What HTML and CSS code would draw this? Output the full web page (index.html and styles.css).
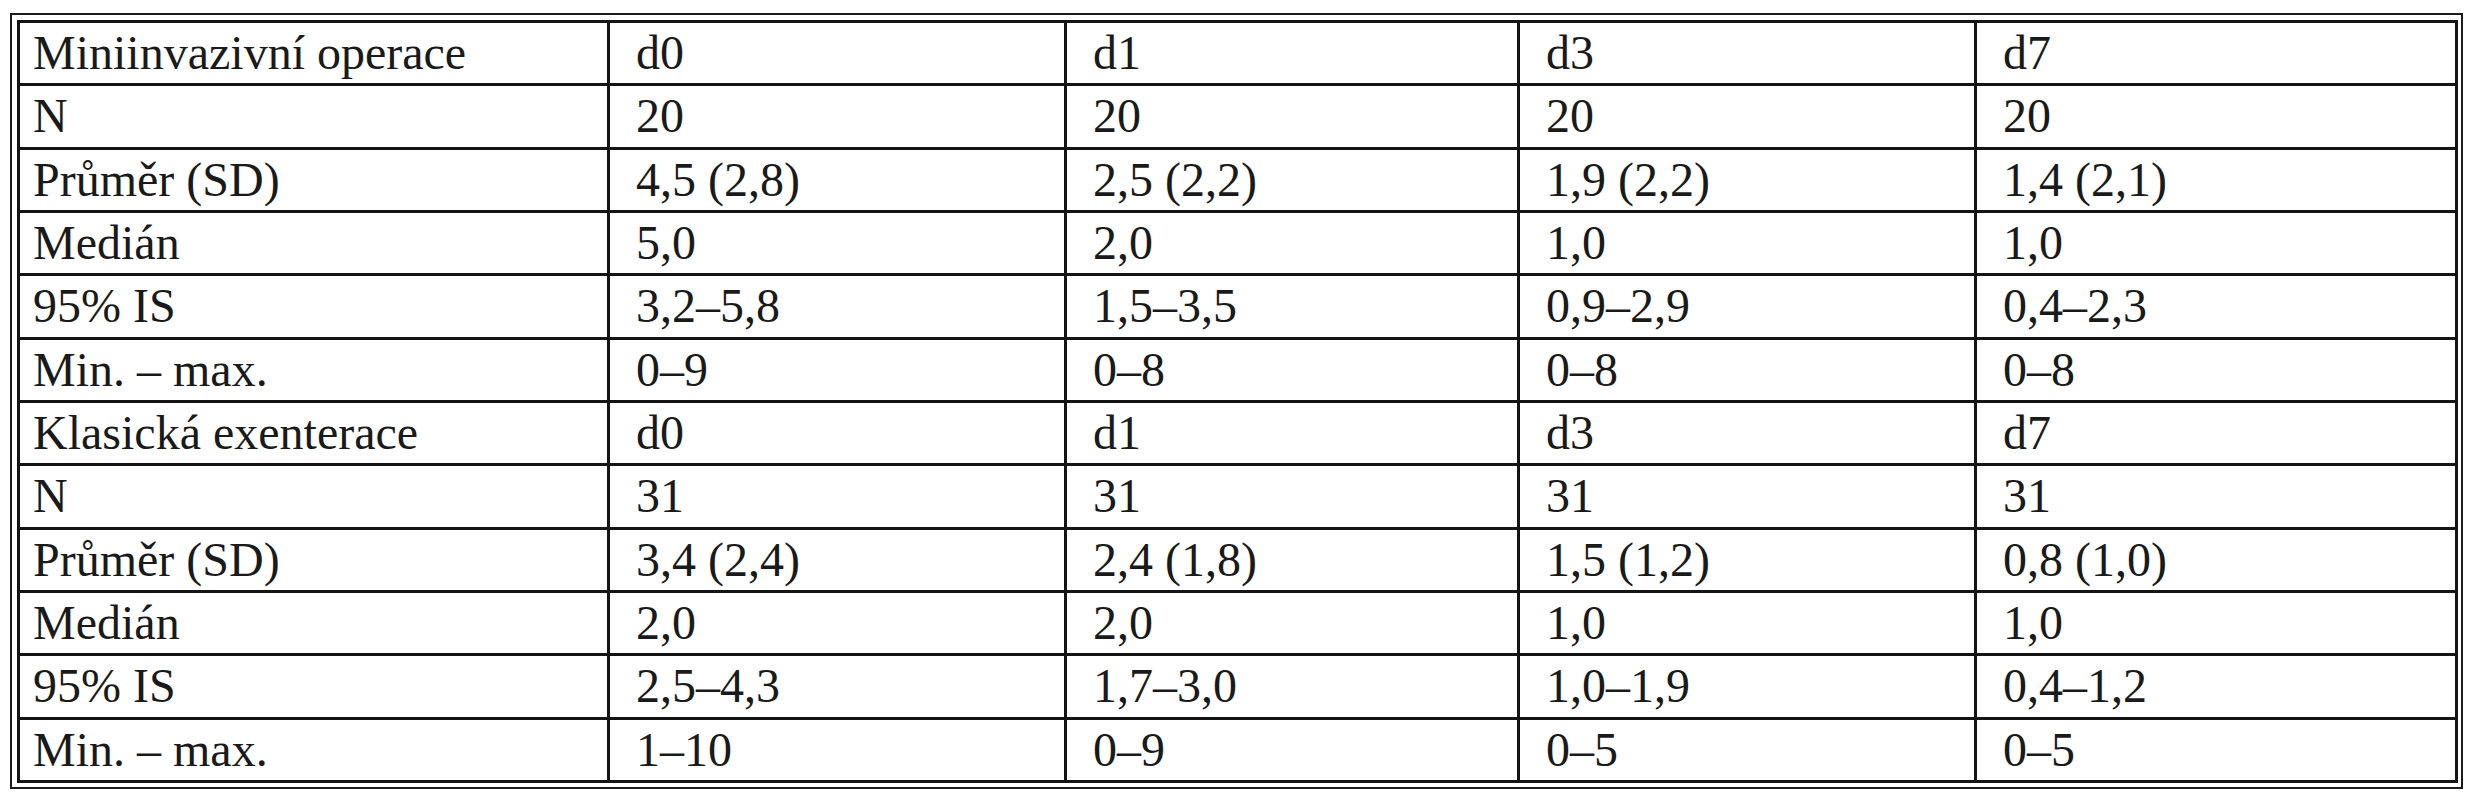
FILE: index.html
```html
<!DOCTYPE html>
<html lang="cs">
<head>
<meta charset="utf-8">
<title>Tabulka</title>
<link rel="stylesheet" href="styles.css">
</head>
<body>
<div class="frame">
<table class="data">
<colgroup>
<col class="c1"><col class="c2"><col class="c3"><col class="c4"><col class="c5">
</colgroup>
<tbody>
<tr><td class="lbl">Miniinvazivní operace</td><td>d0</td><td>d1</td><td>d3</td><td>d7</td></tr>
<tr><td class="lbl">N</td><td>20</td><td>20</td><td>20</td><td>20</td></tr>
<tr><td class="lbl">Průměr (SD)</td><td>4,5 (2,8)</td><td>2,5 (2,2)</td><td>1,9 (2,2)</td><td>1,4 (2,1)</td></tr>
<tr><td class="lbl">Medián</td><td>5,0</td><td>2,0</td><td>1,0</td><td>1,0</td></tr>
<tr><td class="lbl">95% IS</td><td>3,2–5,8</td><td>1,5–3,5</td><td>0,9–2,9</td><td>0,4–2,3</td></tr>
<tr><td class="lbl">Min. – max.</td><td>0–9</td><td>0–8</td><td>0–8</td><td>0–8</td></tr>
<tr><td class="lbl">Klasická exenterace</td><td>d0</td><td>d1</td><td>d3</td><td>d7</td></tr>
<tr><td class="lbl">N</td><td>31</td><td>31</td><td>31</td><td>31</td></tr>
<tr><td class="lbl">Průměr (SD)</td><td>3,4 (2,4)</td><td>2,4 (1,8)</td><td>1,5 (1,2)</td><td>0,8 (1,0)</td></tr>
<tr><td class="lbl">Medián</td><td>2,0</td><td>2,0</td><td>1,0</td><td>1,0</td></tr>
<tr><td class="lbl">95% IS</td><td>2,5–4,3</td><td>1,7–3,0</td><td>1,0–1,9</td><td>0,4–1,2</td></tr>
<tr><td class="lbl">Min. – max.</td><td>1–10</td><td>0–9</td><td>0–5</td><td>0–5</td></tr>
</tbody>
</table>
</div>
</body>
</html>
```

FILE: styles.css
```css
html, body {
  margin: 0;
  padding: 0;
  background: #ffffff;
}

body {
  font-family: "Liberation Serif", "Times New Roman", serif;
  color: #1a1a1a;
}

.frame {
  margin: 13px 0 0 10px;
  width: 2453px;
  box-sizing: border-box;
  border: 2px solid #1a1a1a;
  padding: 5px 4px 4px 5px;
}

.data {
  width: 2440px;
  border-collapse: collapse;
  table-layout: fixed;
}

.c1 { width: 590px; }
.c2 { width: 457px; }
.c3 { width: 453px; }
.c4 { width: 457px; }
.c5 { width: 481px; }

.data td {
  border: 3px solid #141414;
  padding: 0 0 0 26px;
  font-size: 48px;
  line-height: 60.33px;
  white-space: nowrap;
  vertical-align: middle;
}

.data td.lbl {
  padding-left: 13px;
}
```
